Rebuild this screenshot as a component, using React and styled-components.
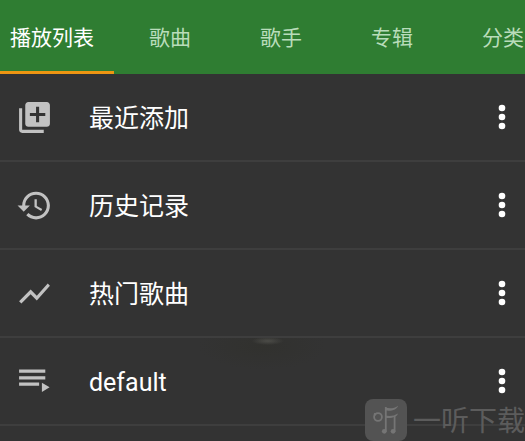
import React, { useState } from "react";
import styled, { createGlobalStyle } from "styled-components";

const GlobalStyle = createGlobalStyle`
  * {
    box-sizing: border-box;
  }

  body {
    margin: 0;
    background: #333333;
    font-family: Roboto, "Noto Sans CJK SC", sans-serif;
  }
`;

const Screen = styled.div`
  position: relative;
  min-height: 100vh;
  overflow: hidden;
  background: #333333;
`;

const TabBar = styled.nav`
  display: flex;
  height: 74px;
  overflow: hidden;
  background: #2f7d32;
`;

const Tab = styled.button`
  flex: none;
  padding: ${(props) => (props.$first ? "4px 20px 0 10px" : "4px 34px 0 35px")};
  border: 0;
  border-bottom: 3px solid ${(props) => (props.$active ? "#ee9512" : "transparent")};
  background: none;
  color: ${(props) => (props.$active ? "#ffffff" : "#b9dcba")};
  font-family: inherit;
  font-size: 21px;
  line-height: 32px;
  white-space: nowrap;
  cursor: pointer;
`;

const List = styled.ul`
  margin: 0;
  padding: 0;
  list-style: none;
`;

const Row = styled.li`
  display: flex;
  align-items: center;
  height: 88px;
  padding: 0 12px 0 16px;
  border-bottom: 2px solid #3e3e3e;

  &:last-child {
    background: radial-gradient(ellipse 16px 4px at 51% 3px, #4c4c48, transparent),
      radial-gradient(ellipse 64px 24px at 50% 8px, #31312e, transparent);
  }
`;

const RowIcon = styled.svg`
  flex: none;
  width: 37px;
  height: 37px;
  fill: #c2c2c2;
`;

const RowTitle = styled.span`
  flex: 1;
  margin-left: 36px;
  padding-top: 4px;
  color: #ffffff;
  font-size: 25px;
  line-height: 32px;
`;

const MenuButton = styled.button`
  display: flex;
  padding: 8px 0;
  border: 0;
  background: none;
  cursor: pointer;

  svg {
    width: 22px;
    height: 26px;
    fill: #ffffff;
  }
`;

const Watermark = styled.div`
  position: absolute;
  right: 0;
  bottom: 0;
  display: flex;
  align-items: center;
  gap: 6px;
  color: #5c5c5c;
  font-size: 28px;
  line-height: 38px;
  white-space: nowrap;
  pointer-events: none;

  span {
    padding-top: 4px;
  }
`;

const Logo = styled.svg`
  width: 42px;
  height: 42px;
`;

const tabs = ["播放列表", "歌曲", "歌手", "专辑", "分类"];

const playlists = [
  {
    title: "最近添加",
    icon: "M4 6H2v14c0 1.1.9 2 2 2h14v-2H4V6zm16-4H8c-1.1 0-2 .9-2 2v12c0 1.1.9 2 2 2h12c1.1 0 2-.9 2-2V4c0-1.1-.9-2-2-2zm-1 9h-4v4h-2v-4H9V9h4V5h2v4h4v2z",
  },
  {
    title: "历史记录",
    icon: "M13 3c-4.97 0-9 4.03-9 9H1l3.89 3.89.07.14L9 12H6c0-3.87 3.13-7 7-7s7 3.13 7 7-3.13 7-7 7c-1.93 0-3.68-.79-4.94-2.06l-1.42 1.42C8.27 19.99 10.51 21 13 21c4.97 0 9-4.03 9-9s-4.03-9-9-9zm-1 5v5l4.28 2.54.72-1.21-3.5-2.08V8H12z",
  },
  {
    title: "热门歌曲",
    icon: "M3.5 18.49l6-6.01 4 4L22 6.92l-1.41-1.41-7.09 7.97-4-4L2 16.99z",
  },
  {
    title: "default",
    icon: "M2 4.2h17v2.2H2zM2 8.6h17v2.1H2zM2 12.7h13v2.1H2zM16.8 12.8l5 3-5 3z",
  },
];

function MoreMenu({ title }) {
  return (
    <MenuButton type="button" aria-label={`${title} 更多`}>
      <svg viewBox="0 0 22 26">
        <circle cx="11" cy="4" r="3.3" />
        <circle cx="11" cy="13" r="3.3" />
        <circle cx="11" cy="22" r="3.3" />
      </svg>
    </MenuButton>
  );
}

export default function App() {
  const [active, setActive] = useState(tabs[0]);

  return (
    <Screen>
      <GlobalStyle />
      <TabBar>
        {tabs.map((tab, index) => (
          <Tab
            key={tab}
            type="button"
            $first={index === 0}
            $active={tab === active}
            onClick={() => setActive(tab)}
          >
            {tab}
          </Tab>
        ))}
      </TabBar>
      <List>
        {playlists.map(({ title, icon }) => (
          <Row key={title}>
            <RowIcon viewBox="0 0 24 24" aria-hidden="true">
              <path d={icon} />
            </RowIcon>
            <RowTitle>{title}</RowTitle>
            <MoreMenu title={title} />
          </Row>
        ))}
      </List>
      <Watermark>
        <Logo viewBox="0 0 42 42" aria-hidden="true">
          <rect width="42" height="42" rx="8" fill="#535353" />
          <g fill="none" stroke="#757575" strokeWidth="1.8">
            <circle cx="13" cy="18" r="3.9" />
            <path d="M9 14.500l2 1.500M20.800 8v24.500M29.600 17v15.500" />
          </g>
          <g fill="#757575">
            <path d="M20 8.500c5 1.500 9 1 13-1.800-1 4-7 5.800-13 4.600zM20 16.500c5 1 9 .5 13-2-1 3.500-7 5.500-13 4.200z" />
            <circle cx="19.300" cy="32.300" r="2.400" />
            <circle cx="28.100" cy="32.300" r="2.400" />
          </g>
        </Logo>
        <span>一听下载</span>
      </Watermark>
    </Screen>
  );
}
